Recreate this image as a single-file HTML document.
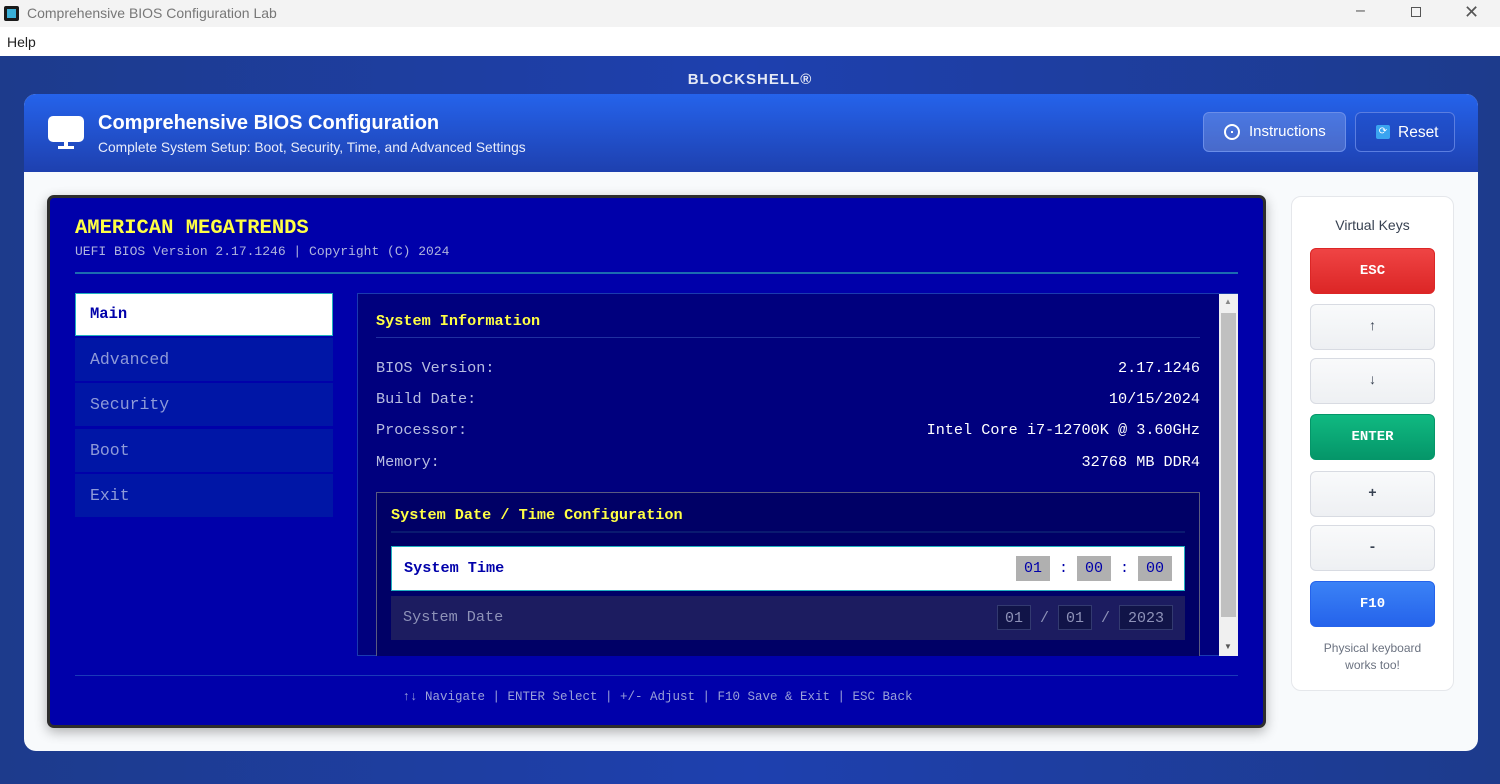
<!DOCTYPE html>
<html><head><meta charset="utf-8"><style>
*{box-sizing:border-box;margin:0;padding:0}
body{width:1500px;height:784px;overflow:hidden;font-family:"Liberation Sans",sans-serif;background:#1e3a8a;position:relative}
.a{position:absolute}
.mono{font-family:"Liberation Mono",monospace}
.nav{position:absolute;left:75px;width:258px;height:43px;background:#0016a6;color:#8e9ad8;font-family:"Liberation Mono",monospace;font-size:16.5px;padding:12px 15px}
.row{position:absolute;left:376px;width:824px;font-family:"Liberation Mono",monospace;font-size:15.2px;color:#b8bde0}
.row span{float:right;color:#fff}
.key{position:absolute;left:1310px;width:125px;height:46px;border-radius:6px;border:1px solid #d8dbe2;background:linear-gradient(#f9fafb,#eef0f3);text-align:center;line-height:44px;font-family:"Liberation Mono",monospace;font-weight:bold;font-size:14px;color:#374151}
.box{display:inline-block;width:36px;height:25px;line-height:25px;text-align:center}
</style></head><body>
<div class="a" style="left:0;top:0;width:1500px;height:27px;background:#f3f3f3"></div>
<div class="a" style="left:4px;top:6px;width:15px;height:15px;background:#1a1a1a;border-radius:2px"><div style="margin:3px;width:9px;height:9px;background:#3ab0d8"></div></div>
<div class="a" style="left:27px;top:5px;font-size:14px;color:#777">Comprehensive BIOS Configuration Lab</div>
<div class="a" style="left:1356px;top:2px;font-size:16px;color:#555">–</div>
<div class="a" style="left:1411px;top:7px;width:10px;height:10px;border:1px solid #555"></div>
<div class="a" style="left:1464px;top:2px;font-size:18px;color:#555">✕</div>
<div class="a" style="left:0;top:27px;width:1500px;height:29px;background:#fff"></div>
<div class="a" style="left:7px;top:34px;font-size:14px;color:#222">Help</div>
<div class="a" style="left:0;top:56px;width:1500px;height:728px;background:linear-gradient(90deg,#1d3b8c,#1e40af 50%,#1d3b8c)"></div>
<div class="a" style="left:0;top:71px;width:1500px;text-align:center;color:#e5e9f5;font-weight:bold;font-size:15px;letter-spacing:1px">BLOCKSHELL®</div>
<div class="a" style="left:24px;top:94px;width:1454px;height:657px;border-radius:12px;background:#f8fafc;overflow:hidden">
 <div class="a" style="left:0;top:0;width:1454px;height:78px;background:linear-gradient(#2563eb,#1e40af)"></div>
</div>
<svg class="a" style="left:48px;top:116px" width="36" height="34" viewBox="0 0 36 34"><rect x="0" y="0" width="36" height="26" rx="5" fill="#fff"/><rect x="16" y="26" width="4" height="5" fill="#fff"/><rect x="10" y="30" width="16" height="3" fill="#fff"/></svg>
<div class="a" style="left:98px;top:112px;color:#fff;font-size:20px;font-weight:bold">Comprehensive BIOS Configuration</div>
<div class="a" style="left:98px;top:140px;color:#e8ecfa;font-size:13.8px">Complete System Setup: Boot, Security, Time, and Advanced Settings</div>
<div class="a" style="left:1203px;top:112px;width:143px;height:40px;border-radius:6px;border:1px solid #6b8ee8;background:rgba(255,255,255,.18);color:#fff;font-size:15px;line-height:38px;padding-left:45px">Instructions</div>
<div class="a" style="left:1224px;top:124px;width:16px;height:16px;border:2px solid #fff;border-radius:50%"><div style="margin:5px 0 0 5px;width:2px;height:2px;background:#fff"></div></div>
<div class="a" style="left:1355px;top:112px;width:100px;height:40px;border-radius:6px;border:1px solid #5b7ee0;background:rgba(30,64,175,.3);color:#fff;font-size:15.5px;line-height:40px;padding-left:42px">Reset</div>
<div class="a" style="left:1376px;top:125px;width:14px;height:14px;background:#3aa4f0;border-radius:2px;color:#fff;font-size:10px;line-height:14px;text-align:center">⟳</div>

<div class="a" style="left:47px;top:195px;width:1219px;height:533px;border:3px solid #2d2d2d;border-radius:7px;background:#0000aa;box-shadow:0 4px 12px rgba(0,0,0,.3)"></div>
<div class="a mono" style="left:75px;top:217px;color:#ffff44;font-size:20.5px;font-weight:bold">AMERICAN MEGATRENDS</div>
<div class="a mono" style="left:75px;top:244px;color:#b0b5dd;font-size:13px">UEFI BIOS Version 2.17.1246 | Copyright (C) 2024</div>
<div class="a" style="left:75px;top:272px;width:1163px;height:2px;background:#1c6bb0"></div>
<div class="nav" style="top:293px;background:#fff;border:1px solid #20b0c0;color:#0000aa;font-weight:bold;padding:11px 14px;font-size:15.5px">Main</div>
<div class="nav" style="top:338px">Advanced</div>
<div class="nav" style="top:383px">Security</div>
<div class="nav" style="top:429px">Boot</div>
<div class="nav" style="top:474px">Exit</div>
<div class="a" style="left:357px;top:293px;width:881px;height:363px;background:#00007e;border:1px solid #1a3ab0"></div>
<div class="a mono" style="left:376px;top:312px;color:#ffff44;font-weight:bold;font-size:15.2px">System Information</div>
<div class="a" style="left:376px;top:337px;width:824px;height:1px;background:#2030a0"></div>
<div class="row" style="top:359px">BIOS Version:<span>2.17.1246</span></div>
<div class="row" style="top:390px">Build Date:<span>10/15/2024</span></div>
<div class="row" style="top:421px">Processor:<span>Intel Core i7-12700K @ 3.60GHz</span></div>
<div class="row" style="top:453px">Memory:<span>32768 MB DDR4</span></div>
<div class="a" style="left:376px;top:492px;width:824px;height:164px;background:#000066;border:1px solid #5a5a80;border-bottom:none"></div>
<div class="a mono" style="left:391px;top:506px;color:#ffff44;font-weight:bold;font-size:15.2px">System Date / Time Configuration</div>
<div class="a" style="left:391px;top:531px;width:794px;height:2px;background:#0a1a70"></div>
<div class="a mono" style="left:391px;top:546px;width:794px;height:45px;background:#fff;border:1px solid #20b0c0;color:#0000aa;font-weight:bold;font-size:15.2px;padding:12px 12px">System Time
 <div style="position:absolute;right:12px;top:9px;font-weight:normal;font-size:15px"><span class="box" style="background:#b0b0b0;width:34px">01</span> : <span class="box" style="background:#b0b0b0;width:34px">00</span> : <span class="box" style="background:#b0b0b0;width:34px">00</span></div></div>
<div class="a mono" style="left:391px;top:596px;width:794px;height:44px;background:#1c1c60;color:#8e92b8;font-size:15.2px;padding:12px 12px">System Date
 <div style="position:absolute;right:12px;top:9px;font-size:15px"><span class="box" style="background:#111448;border:1px solid #333a70;width:34px">01</span> / <span class="box" style="background:#111448;border:1px solid #333a70;width:34px">01</span> / <span class="box" style="background:#111448;border:1px solid #333a70;width:54px">2023</span></div></div>
<div class="a" style="left:1219px;top:294px;width:19px;height:362px;background:#f0f0f0"></div>
<div class="a" style="left:1221px;top:313px;width:15px;height:304px;background:#c0c0c0"></div>
<div class="a" style="left:1224px;top:297px;font-size:8px;color:#888">▲</div>
<div class="a" style="left:1224px;top:642px;font-size:8px;color:#555">▼</div>
<div class="a" style="left:75px;top:675px;width:1163px;height:1px;background:#1a3ab8"></div>
<div class="a mono" style="left:0;top:690px;width:1315px;text-align:center;color:#9aa0d8;font-size:12.5px">↑↓ Navigate | ENTER Select | +/- Adjust | F10 Save &amp; Exit | ESC Back</div>

<div class="a" style="left:1291px;top:196px;width:163px;height:495px;background:#fff;border:1px solid #e5e7eb;border-radius:10px"></div>
<div class="a" style="left:1291px;top:217px;width:163px;text-align:center;font-size:14px;color:#374151">Virtual Keys</div>
<div class="key" style="top:248px;background:linear-gradient(#ef4444,#dc2626);color:#fff;border-color:#dc2626">ESC</div>
<div class="key" style="top:304px;font-weight:normal">↑</div>
<div class="key" style="top:358px;font-weight:normal">↓</div>
<div class="key" style="top:414px;background:linear-gradient(#10b981,#059669);color:#fff;border-color:#059669">ENTER</div>
<div class="key" style="top:471px">+</div>
<div class="key" style="top:525px">-</div>
<div class="key" style="top:581px;background:linear-gradient(#3b82f6,#2563eb);color:#fff;border-color:#2563eb">F10</div>
<div class="a" style="left:1291px;top:640px;width:163px;text-align:center;font-size:12px;line-height:17px;color:#6b7280">Physical keyboard<br>works too!</div>
</body></html>
